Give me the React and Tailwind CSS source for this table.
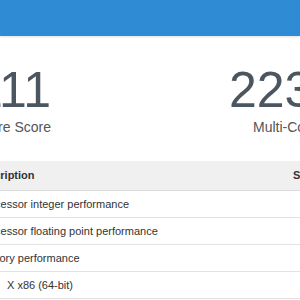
export default function App() {
  const rows = [
    { d: "Processor integer performance", off: "-ml-[22px]" },
    { d: "Processor floating point performance", off: "-ml-[22px]" },
    { d: "Memory performance", off: "-ml-[25px]" },
  ];
  return (
    <div className="w-[300px] h-[300px] overflow-hidden bg-white font-['Liberation_Sans',Arial,sans-serif]">
      <div className="h-[36px] bg-[#2f8bd3] shadow-[0_1px_2px_rgba(0,0,0,0.12)]" />
      <div className="flex pt-[29px]">
        <div className="w-[51px] shrink-0 flex flex-col items-end">
          <div className="text-[50px] leading-[50px] text-[#4b5661] whitespace-nowrap">3111</div>
          <div className="mt-[3px] text-[14px] leading-[18px] text-[#555] whitespace-nowrap">Single-Core Score</div>
        </div>
        <div className="ml-[178px] shrink-0 flex flex-col items-start">
          <div className="text-[50px] leading-[50px] text-[#4b5661] whitespace-nowrap">22345</div>
          <div className="mt-[3px] ml-[24px] text-[14px] leading-[18px] text-[#555] whitespace-nowrap">Multi-Core Score</div>
        </div>
      </div>
      <div className="mt-[25px] text-[11px] text-[#333]">
        <div className="flex h-[30px] items-center bg-[#f0f0f0] border-b border-[#dcdcdc] font-bold">
          <div className="w-[319px] shrink-0 -ml-[26px] whitespace-nowrap">Description</div>
          <div className="whitespace-nowrap">Score</div>
        </div>
        {rows.map((r) => (
          <div key={r.d} className="flex h-[27px] items-center border-b border-[#e2e2e2]">
            <div className={`shrink-0 whitespace-nowrap ${r.off}`}>{r.d}</div>
          </div>
        ))}
        <div className="flex h-[27px] items-center border-b border-[#e2e2e2]">
          <div className="pl-[7px] whitespace-nowrap">X x86 (64-bit)</div>
        </div>
      </div>
    </div>
  );
}
